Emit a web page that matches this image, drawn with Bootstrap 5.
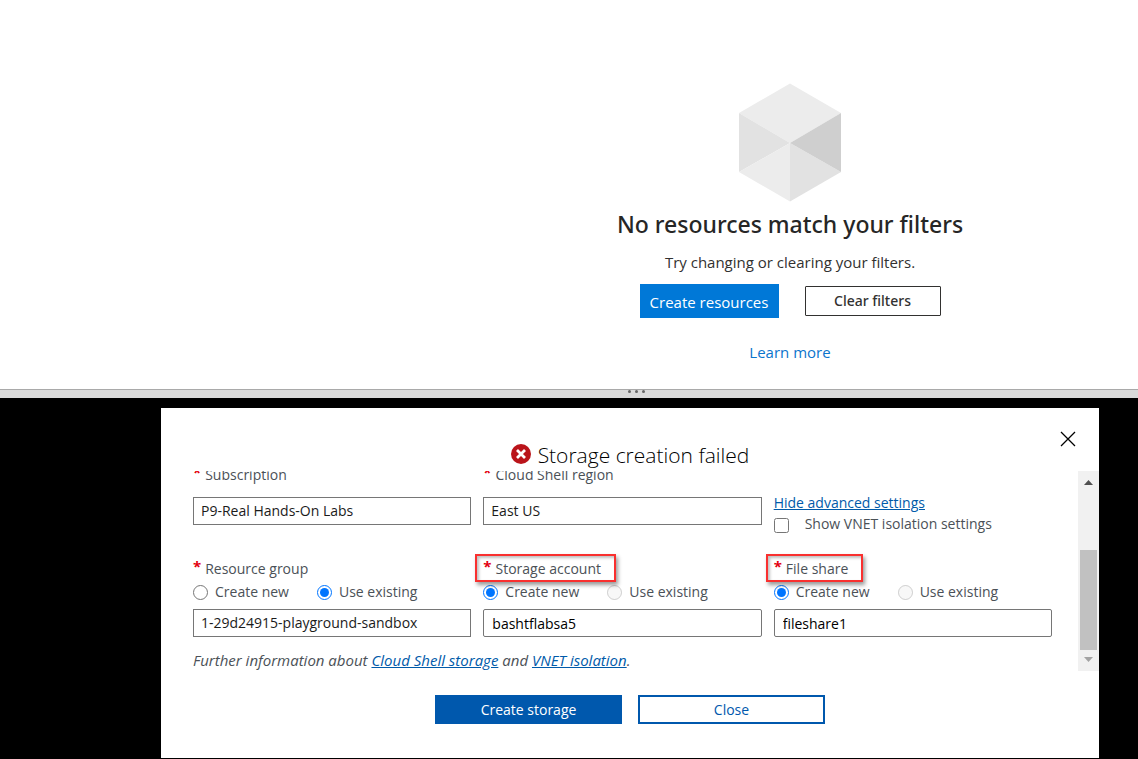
<!DOCTYPE html>
<html lang="en">
<head>
<meta charset="utf-8">
<meta name="viewport" content="width=device-width, initial-scale=1">
<title>Cloud Shell storage</title>
<link rel="stylesheet" href="https://cdn.jsdelivr.net/npm/bootstrap@5.3.0/dist/css/bootstrap.min.css">
<style>
  body { font-family: "Open Sans", "Noto Sans", sans-serif; font-size: 14px; line-height: 22px; color: #323130; background: #000; }
  a { color: #005aa9; }
  .btn { --bs-btn-border-radius: 0; font-size: 14px; line-height: 20px; }

  /* empty results pane */
  .results { padding: 83px 0 26px 442px; }
  .cube { width: 104px; height: 119px; }
  .results h1 { font-family: "Noto Sans", sans-serif; font-size: 23px; line-height: 32px; font-weight: 500; margin: 6px 0 12px; color: #262626; }
  .results p { font-size: 15px; line-height: 20px; margin-bottom: 12px; }
  .btn-azure { --bs-btn-bg: #0078d7; --bs-btn-color: #fff; --bs-btn-hover-bg: #0067b8; --bs-btn-hover-color: #fff; width: 139px; height: 34px; padding: 2px 0 0; border: 0; font-size: 15px; }
  .btn-clear { --bs-btn-color: #323130; --bs-btn-border-color: #323130; --bs-btn-border-radius: 1px; width: 136px; height: 30px; padding: 0; font-family: "Noto Sans", sans-serif; font-size: 14px; font-weight: 500; }
  .actions { gap: 26px; margin-bottom: 23px; }
  .learn { color: #0b74cc; font-size: 15px; line-height: 22px; }

  .splitter { height: 9px; background: #dadada; border-top: 1px solid #a9a9a9; padding-left: 134px; }
  .splitter i { width: 3px; height: 3px; border-radius: 50%; background: #666; }

  /* shell pane */
  .shell { padding: 10px 39px 1px 161px; }
  .panel { padding-bottom: 34px; }
  .panel-head { grid-template-columns: 1fr auto 1fr; height: 63px; padding: 20px 20px 0; }
  .close-x { width: 22px; height: 22px; padding: 0; border: 0; background: none; }
  .panel h2 { font-size: 21px; line-height: 30px; font-weight: 300; color: #000; margin: 12px 0 0; gap: 7px; }
  .panel h2 svg { width: 20px; height: 20px; margin-bottom: 3px; }
  .scroll-view { height: 200px; }
  .fields { padding: 0 26px 0 32px; color: #4b5157; }
  .fields .row { --bs-gutter-x: 12px; }
  .req { color: #e3000f; font-size: 15px; line-height: 1; font-weight: 700; margin-right: 4px; vertical-align: 2px; }
  .box { height: 28px; padding: 0 7px; border: 1px solid #767676; border-radius: 0; font-size: 14px; line-height: 20px; color: #1b1b1b; background: #fff; appearance: none; }
  .box-text { border-radius: 2px; padding-left: 8px; color: #000; }
  .settings-row { margin-bottom: 24px; }
  .field-label { margin-bottom: 11px; }
  .extras { padding-top: 28px; }
  .pick { gap: 7px; height: 24px; }
  .pick input { width: 15px; height: 15px; margin: 0; accent-color: #0075ff; }
  .pair { gap: 28px; margin-bottom: 5px; }
  .toggle { gap: 16px; height: 20px; }
  .toggle input { width: 15px; height: 15px; margin: 3px 0 0; }
  .note { margin: 12px 0 0; font-size: 15px; line-height: 22px; font-style: italic; }
  /* outline drawn over the field label */
  .callout-frame { position: absolute; inset: -4px -15px -2px -8px; border: 2px solid #f9302f; box-shadow: 2px 3px 4px rgba(0,0,0,.4), inset 2px 2px 3px rgba(0,0,0,.25); pointer-events: none; }
  .bar { width: 21px; background: #f1f1f1; padding: 8px 2px; }
  .bar .thumb { width: 17px; height: 100px; background: #c1c1c1; margin-bottom: 6px; }
  .btn-panel { width: 187px; height: 29px; padding: 0; --bs-btn-border-width: 2px; --bs-btn-border-color: #0058ad; --bs-btn-color: #0058ad; --bs-btn-hover-border-color: #0058ad; --bs-btn-hover-color: #0058ad; }
  .btn-solid { --bs-btn-bg: #0058ad; --bs-btn-color: #fff; --bs-btn-hover-bg: #004a92; --bs-btn-hover-color: #fff; }
</style>
</head>
<body>
<main class="bg-white results d-flex flex-column align-items-center text-center">
  <svg class="cube" viewBox="0 0 104 119" aria-hidden="true">
    <path fill="#ececec" d="M52 .5 103 30 52 60 1 30z"/>
    <path fill="#e2e2e2" d="M1 30 52 60 1 89z"/>
    <path fill="#ececec" d="M1 89 52 60v58.500z"/>
    <path fill="#e2e2e2" d="M52 60 103 89 52 118.500z"/>
    <path fill="#cfcfcf" d="M103 30v59L52 60z"/>
  </svg>
  <h1>No resources match your filters</h1>
  <p>Try changing or clearing your filters.</p>
  <div class="actions d-flex align-items-center">
    <button type="button" class="btn btn-azure">Create resources</button>
    <button type="button" class="btn btn-clear">Clear filters</button>
  </div>
  <a href="#" class="learn text-decoration-none">Learn more</a>
</main>

<div class="splitter d-flex justify-content-center" role="separator">
  <div class="d-flex gap-1"><i></i><i></i><i></i></div>
</div>

<section class="shell">
  <div class="panel bg-white d-flex flex-column">
    <div class="panel-head d-grid align-items-start">
      <span></span>
      <h2 class="d-flex align-items-center">
        <svg viewBox="0 0 20 20" aria-hidden="true"><circle cx="10" cy="10" r="10" fill="#ba141a"/><path d="M6 6l8 8M14 6l-8 8" stroke="#fff" stroke-width="2.800"/></svg>
        <span>Storage creation failed</span>
      </h2>
      <button type="button" class="close-x ms-auto d-flex" aria-label="Dismiss">
        <svg width="22" height="22" viewBox="0 0 22 22" fill="none" stroke="#000" stroke-width="1.300"><path d="M4 4 18 18M18 4 4 18"/></svg>
      </button>
    </div>
    <div class="scroll-view d-flex">
      <form class="fields flex-grow-1 d-flex flex-column justify-content-end overflow-hidden">
        <div class="row settings-row">
          <div class="col-4">
            <label class="field-label d-block" for="sub"><span class="req">*</span>Subscription</label>
            <select id="sub" class="box w-100 d-block"><option>P9-Real Hands-On Labs</option></select>
          </div>
          <div class="col-4">
            <label class="field-label d-block" for="region"><span class="req">*</span>Cloud Shell region</label>
            <select id="region" class="box w-100 d-block"><option>East US</option></select>
          </div>
          <div class="col-4 extras d-flex flex-column">
            <a href="#" class="align-self-start">Hide advanced settings</a>
            <div class="toggle d-flex align-items-center">
              <input type="checkbox" id="vnet"><label for="vnet">Show VNET isolation settings</label>
            </div>
          </div>
        </div>
        <div class="row">
          <div class="col-4">
            <label for="rg"><span class="req">*</span>Resource group</label>
            <div class="pair d-flex">
              <div class="pick d-flex align-items-center"><input type="radio" name="rg" id="rg1"><label for="rg1">Create new</label></div>
              <div class="pick d-flex align-items-center"><input type="radio" name="rg" id="rg2" checked><label for="rg2">Use existing</label></div>
            </div>
            <select id="rg" class="box w-100 d-block"><option>1-29d24915-playground-sandbox</option></select>
          </div>
          <div class="col-4">
            <label for="sa" class="position-relative"><span class="req">*</span>Storage account<span class="callout-frame"></span></label>
            <div class="pair d-flex">
              <div class="pick d-flex align-items-center"><input type="radio" name="sa" id="sa1" checked><label for="sa1">Create new</label></div>
              <div class="pick d-flex align-items-center"><input type="radio" name="sa" id="sa2" disabled><label for="sa2">Use existing</label></div>
            </div>
            <input type="text" id="sa" class="box box-text w-100 d-block" value="bashtflabsa5">
          </div>
          <div class="col-4">
            <label for="fs" class="position-relative"><span class="req">*</span>File share<span class="callout-frame"></span></label>
            <div class="pair d-flex">
              <div class="pick d-flex align-items-center"><input type="radio" name="fs" id="fs1" checked><label for="fs1">Create new</label></div>
              <div class="pick d-flex align-items-center"><input type="radio" name="fs" id="fs2" disabled><label for="fs2">Use existing</label></div>
            </div>
            <input type="text" id="fs" class="box box-text w-100 d-block" value="fileshare1">
          </div>
        </div>
        <p class="note">Further information about <a href="#">Cloud Shell storage</a> and <a href="#">VNET isolation</a>.</p>
      </form>
      <div class="bar d-flex flex-column align-items-center flex-shrink-0" aria-hidden="true">
        <svg width="9" height="7" viewBox="0 0 9 7"><path d="M0 6 4.500 1 9 6z" fill="#505050"/></svg>
        <div class="thumb mt-auto"></div>
        <svg width="9" height="7" viewBox="0 0 9 7"><path d="M0 1 4.500 6 9 1z" fill="#a3a3a3"/></svg>
      </div>
    </div>
    <div class="d-flex justify-content-center gap-3 mt-4">
      <button type="button" class="btn btn-panel btn-solid">Create storage</button>
      <button type="button" class="btn btn-panel">Close</button>
    </div>
  </div>
</section>
<script src="https://cdn.jsdelivr.net/npm/bootstrap@5.3.0/dist/js/bootstrap.bundle.min.js"></script>
</body>
</html>
